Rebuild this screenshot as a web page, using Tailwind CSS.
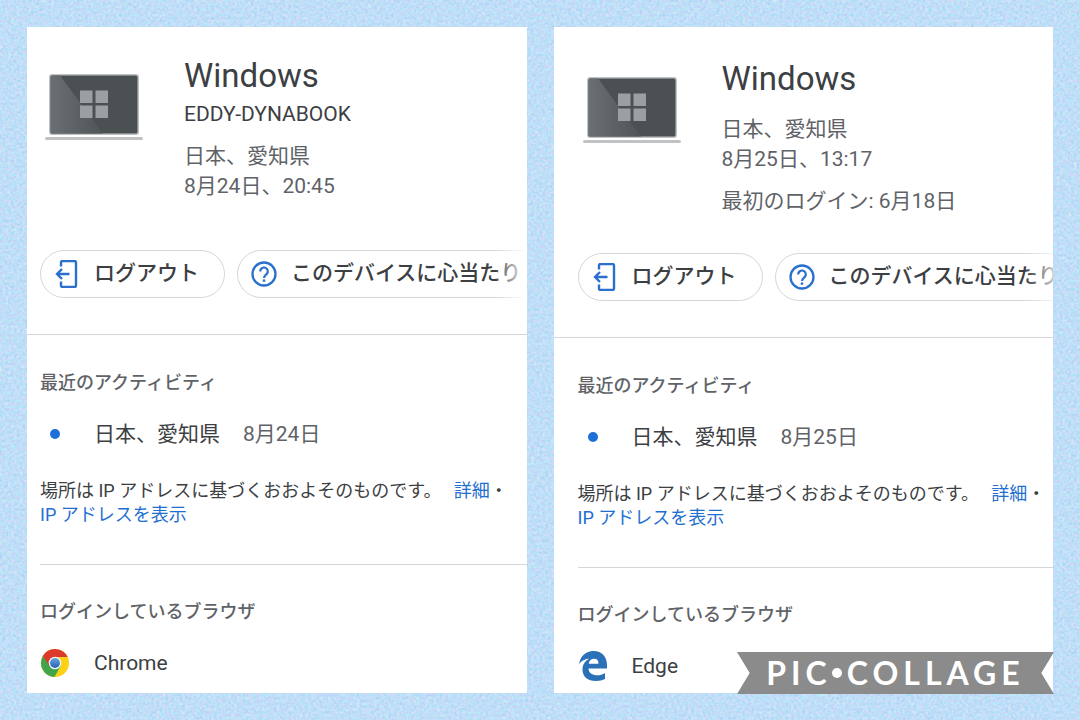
<!DOCTYPE html>
<html lang="ja">
<head>
  <meta charset="UTF-8" />
  <meta name="viewport" content="width=device-width, initial-scale=1.0" />
  <title>お使いのデバイス</title>
  <script src="https://cdn.jsdelivr.net/npm/@tailwindcss/browser@4"></script>
</head>
<body class="relative min-h-screen bg-[#c3def8] font-['Roboto','Noto_Sans_CJK_JP',sans-serif] text-[#3c4043]">

  <!-- Paper texture -->
  <svg class="absolute inset-0 h-full w-full" aria-hidden="true">
    <filter id="paper" x="0" y="0" width="100%" height="100%" color-interpolation-filters="sRGB">
      <feTurbulence type="fractalNoise" baseFrequency="0.35" numOctaves="3" seed="4" />
      <feColorMatrix values="0.3 0 0 0 0.6  0 0.18 0 0 0.78  0 0 0.06 0 0.94  0 0 0 0 1" />
    </filter>
    <rect width="100%" height="100%" filter="url(#paper)" />
  </svg>

  <!-- Shared icons -->
  <svg class="absolute h-0 w-0" aria-hidden="true">
    <defs>
      <linearGradient id="glare" x1="0" y1="0" x2="1" y2="0">
        <stop offset="0" stop-color="#6a6f73" />
        <stop offset="1" stop-color="#4f5457" />
      </linearGradient>
      <linearGradient id="chrome-blue" x1="0" y1="0" x2="0" y2="1">
        <stop offset="0" stop-color="#6ba4e0" />
        <stop offset="1" stop-color="#2264b4" />
      </linearGradient>
    </defs>
    <symbol id="laptop" viewBox="0 0 98 68">
      <rect x="4" y="1" width="90" height="61" rx="3" fill="#c0c2c4" />
      <rect x="5.500" y="2.500" width="87" height="58" rx="1.500" fill="#4b5053" />
      <path d="M7 2.500H15L58 60.500H7a1.500 1.500 0 0 1-1.500-1.500V4A1.500 1.500 0 0 1 7 2.500Z" fill="url(#glare)" />
      <path d="M35 17.500H47.500V30H35ZM50.500 17.500H63V30H50.500ZM35 32.500H47.500V45H35ZM50.500 32.500H63V45H50.500Z" fill="#9b9fa3" />
      <rect x="0" y="64" width="98" height="3" rx="1.500" fill="#c0c2c4" />
    </symbol>
    <symbol id="logout" viewBox="0 0 26 28">
      <path d="M7 6.500V2.500A1.500 1.500 0 0 1 8.500 1H20.500A1.500 1.500 0 0 1 22 2.500V25.500A1.500 1.500 0 0 1 20.500 27H8.500A1.500 1.500 0 0 1 7 25.500V21.500" fill="none" stroke="#2a70cc" stroke-width="2.400" />
      <path d="M15.500 14H3.500M8 9L3 14L8 19" fill="none" stroke="#2a70cc" stroke-width="2.400" />
    </symbol>
    <symbol id="help" viewBox="0 0 26 26">
      <circle cx="13" cy="13" r="11.500" fill="none" stroke="#2a70cc" stroke-width="2.300" />
      <path d="M9.200 10.500A3.800 3.800 0 1 1 15.600 13.100C14.200 14.400 13 14.900 13 17" fill="none" stroke="#2a70cc" stroke-width="2.200" />
      <rect x="11.800" y="18.400" width="2.400" height="2.400" fill="#2a70cc" />
    </symbol>
    <symbol id="chrome" viewBox="0 0 28 28">
      <circle cx="14" cy="14" r="14" fill="#fcd116" />
      <path d="M1.880 7A14 14 0 0 0 13.500 28L19.500 17.200L14 14Z" fill="#3fa64a" />
      <path d="M1.880 7A14 14 0 0 1 26.600 8H14V14L8.500 17.200Z" fill="#db3a2d" />
      <circle cx="14" cy="14" r="6.300" fill="#f4f6f8" />
      <circle cx="14" cy="14" r="5" fill="url(#chrome-blue)" />
    </symbol>
    <symbol id="edge" viewBox="0 0 28 30">
      <path d="M0 13C1.500 5 7 0 14.500 0C23 0 28 6 28 14V17.500H9.500C9.700 22 13.500 24.300 18 24.300C21 24.300 23.800 23.400 26 22V28C23.500 29.300 20.500 30 17 30C8.500 30 3.500 25.500 3.500 18.500C3.500 13.500 6 9.800 10.500 7.800C6 7.800 2.500 9.800 0 13ZM9.700 12.700H19.500C19.500 9.500 18 7.700 15 7.700C12.300 7.700 10.300 9.500 9.700 12.700Z" fill="#2b71b8" />
    </symbol>
  </svg>

  <main class="relative grid min-h-screen grid-cols-2 gap-[27px] p-[27px]">

    <!-- Left device -->
    <section class="overflow-hidden bg-white pt-[29px]">
      <header class="flex min-h-[194px] items-start gap-[41px] pl-[18px]">
        <svg class="mt-[17px] h-[68px] w-[98px] shrink-0" role="img" aria-label="ノートパソコン"><use href="#laptop" /></svg>
        <div class="text-[21px] leading-[30px]">
          <h1 class="text-[33px] leading-[40px]">Windows</h1>
          <p class="mt-[3px]">EDDY-DYNABOOK</p>
          <p class="mt-3 text-[#5f6368]">日本、愛知県</p>
          <p class="text-[#5f6368]">8月24日、20:45</p>
        </div>
      </header>

      <div class="relative flex gap-3 overflow-hidden pl-[13px] text-[21px] font-medium">
        <button class="flex h-12 shrink-0 items-center gap-[14px] rounded-full border border-[#d5d7da] pl-[13px] pr-[25px]">
          <svg class="h-7 w-[26px]"><use href="#logout" /></svg>ログアウト
        </button>
        <button class="flex h-12 shrink-0 items-center gap-[14px] rounded-full border border-[#d5d7da] pl-[13px] pr-12">
          <svg class="size-[26px]"><use href="#help" /></svg>このデバイスに心当たり
        </button>
        <div class="pointer-events-none absolute inset-y-0 right-0 w-8 bg-linear-to-r from-white/0 to-white"></div>
      </div>

      <div class="mt-9 border-t border-[#d5d7da] pl-[13px] pt-9">
        <h2 class="text-[18px] font-medium leading-6 text-[#5f6368]">最近のアクティビティ</h2>
        <div class="mt-[23px] flex items-center text-[21px] leading-8">
          <span class="ml-[10px] mr-[34px] size-[10px] rounded-full bg-[#1f6fd8]"></span>
          <span>日本、愛知県</span>
          <span class="ml-[23px] text-[#5f6368]">8月24日</span>
        </div>
        <p class="mt-[29px] whitespace-nowrap text-[18px] leading-6">場所は IP アドレスに基づくおおよそのものです。 <a href="#" class="ml-2 text-[#1f6fd0]">詳細</a>・<br><a href="#" class="text-[#1f6fd0]">IP アドレスを表示</a></p>
        <hr class="mt-[37px] border-[#d5d7da]">
        <h2 class="mt-[35px] text-[18px] font-medium leading-6 text-[#5f6368]">ログインしているブラウザ</h2>
        <div class="mt-[23px] flex items-center gap-[25px] pl-px text-[21px] leading-8">
          <svg class="size-7"><use href="#chrome" /></svg>Chrome
        </div>
      </div>
    </section>

    <!-- Right device -->
    <section class="overflow-hidden bg-white pt-[32px]">
      <header class="flex min-h-[194px] items-start gap-[41px] pl-[29px]">
        <svg class="mt-[17px] h-[68px] w-[98px] shrink-0" role="img" aria-label="ノートパソコン"><use href="#laptop" /></svg>
        <div class="text-[21px] leading-[30px] text-[#5f6368]">
          <h1 class="text-[33px] leading-[40px] text-[#3c4043]">Windows</h1>
          <p class="mt-[15px]">日本、愛知県</p>
          <p>8月25日、13:17</p>
          <p class="mt-3">最初のログイン: 6月18日</p>
        </div>
      </header>

      <div class="relative flex gap-3 overflow-hidden pl-[24px] text-[21px] font-medium">
        <button class="flex h-12 shrink-0 items-center gap-[14px] rounded-full border border-[#d5d7da] pl-[13px] pr-[25px]">
          <svg class="h-7 w-[26px]"><use href="#logout" /></svg>ログアウト
        </button>
        <button class="flex h-12 shrink-0 items-center gap-[14px] rounded-full border border-[#d5d7da] pl-[13px] pr-12">
          <svg class="size-[26px]"><use href="#help" /></svg>このデバイスに心当たり
        </button>
        <div class="pointer-events-none absolute inset-y-0 right-0 w-7 bg-linear-to-r from-white/0 to-white/70"></div>
      </div>

      <div class="mt-9 border-t border-[#d5d7da] pl-[24px] pt-9">
        <h2 class="text-[18px] font-medium leading-6 text-[#5f6368]">最近のアクティビティ</h2>
        <div class="mt-[23px] flex items-center text-[21px] leading-8">
          <span class="ml-[10px] mr-[34px] size-[10px] rounded-full bg-[#1f6fd8]"></span>
          <span>日本、愛知県</span>
          <span class="ml-[23px] text-[#5f6368]">8月25日</span>
        </div>
        <p class="mt-[29px] whitespace-nowrap text-[18px] leading-6">場所は IP アドレスに基づくおおよそのものです。 <a href="#" class="ml-2 text-[#1f6fd0]">詳細</a>・<br><a href="#" class="text-[#1f6fd0]">IP アドレスを表示</a></p>
        <hr class="mt-[37px] border-[#d5d7da]">
        <h2 class="mt-[35px] text-[18px] font-medium leading-6 text-[#5f6368]">ログインしているブラウザ</h2>
        <div class="mt-[23px] flex items-center gap-[25px] pl-px text-[21px] leading-8">
          <svg class="h-[30px] w-7"><use href="#edge" /></svg>Edge
        </div>
      </div>
    </section>
  </main>

  <!-- Ribbon -->
  <div class="absolute bottom-[26px] right-[26px] flex h-[42px] w-[317px] items-center justify-center bg-[#8b8b8b] font-['Lato',sans-serif] text-[32px] font-bold leading-none tracking-[5px] text-white [clip-path:polygon(0_0,100%_0,96%_50%,100%_100%,0_100%,4%_50%)]">
    <span>PIC</span><span class="mr-[5px] size-[10px] rounded-full bg-white"></span><span>COLLAGE</span>
  </div>

</body>
</html>
